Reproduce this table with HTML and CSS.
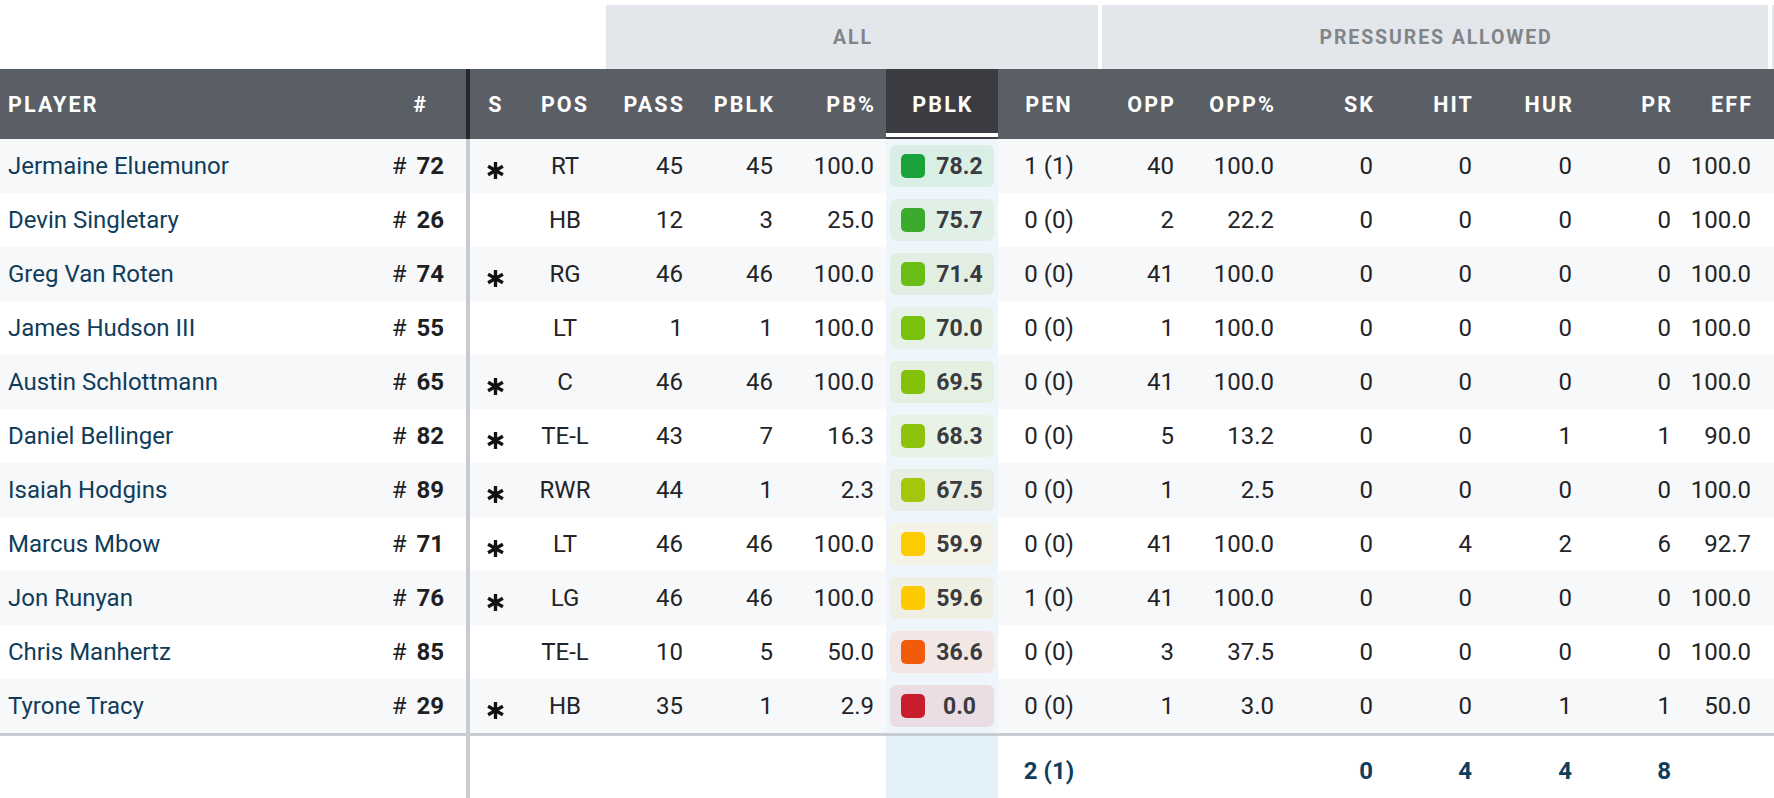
FILE: index.html
```html
<!DOCTYPE html>
<html>
<head>
<meta charset="utf-8">
<link rel="stylesheet" href="styles.css">
</head>
<body>
<table class="grid">
  <colgroup>
    <col class="w-player"><col class="w-num"><col class="w-s"><col class="w-pos">
    <col class="w-pass"><col class="w-pblk"><col class="w-pbp"><col class="w-act"><col class="w-pen">
    <col class="w-opp"><col class="w-oppp"><col class="w-sk"><col class="w-hit"><col class="w-hur"><col class="w-pr"><col class="w-eff"><col class="w-end">
  </colgroup>
  <thead>
    <tr class="groups">
      <th colspan="4"></th>
      <th colspan="5"><div class="gbox">ALL</div></th>
      <th colspan="7"><div class="gbox">PRESSURES ALLOWED</div></th>
      <th><div class="gbox gbox-end"></div></th>
    </tr>
    <tr class="heads">
      <th class="left">PLAYER</th>
      <th class="right num">#</th>
      <th class="center sep">S</th>
      <th class="center pos">POS</th>
      <th class="right">PASS</th>
      <th class="right">PBLK</th>
      <th class="right">PB%</th>
      <th class="center active">PBLK</th>
      <th class="center">PEN</th>
      <th class="right">OPP</th>
      <th class="right">OPP%</th>
      <th class="right">SK</th>
      <th class="right">HIT</th>
      <th class="right">HUR</th>
      <th class="right">PR</th>
      <th class="right eff">EFF</th>
      <th></th>
    </tr>
  </thead>
  <tbody id="rows">
    <tr><td class="name">Jermaine Eluemunor</td><td class="jersey"># <b>72</b></td><td class="sep star"><svg viewBox="0 0 20 20" class="ast"><path d="M10 1V19M2.2 5.5L17.8 14.5M17.8 5.5L2.2 14.5"/></svg></td><td class="center pos">RT</td><td class="right">45</td><td class="right">45</td><td class="right">100.0</td><td class="active"><div class="grade" style="--c:#1aa33a;--bg:#d9eee5"><i></i><span>78.2</span></div></td><td class="center">1 (1)</td><td class="right">40</td><td class="right">100.0</td><td class="right">0</td><td class="right">0</td><td class="right">0</td><td class="right">0</td><td class="right eff">100.0</td><td></td></tr>
    <tr><td class="name">Devin Singletary</td><td class="jersey"># <b>26</b></td><td class="sep star"></td><td class="center pos">HB</td><td class="right">12</td><td class="right">3</td><td class="right">25.0</td><td class="active"><div class="grade" style="--c:#3aab2c;--bg:#e0f0e6"><i></i><span>75.7</span></div></td><td class="center">0 (0)</td><td class="right">2</td><td class="right">22.2</td><td class="right">0</td><td class="right">0</td><td class="right">0</td><td class="right">0</td><td class="right eff">100.0</td><td></td></tr>
    <tr><td class="name">Greg Van Roten</td><td class="jersey"># <b>74</b></td><td class="sep star"><svg viewBox="0 0 20 20" class="ast"><path d="M10 1V19M2.2 5.5L17.8 14.5M17.8 5.5L2.2 14.5"/></svg></td><td class="center pos">RG</td><td class="right">46</td><td class="right">46</td><td class="right">100.0</td><td class="active"><div class="grade" style="--c:#6abd14;--bg:#e3eee2"><i></i><span>71.4</span></div></td><td class="center">0 (0)</td><td class="right">41</td><td class="right">100.0</td><td class="right">0</td><td class="right">0</td><td class="right">0</td><td class="right">0</td><td class="right eff">100.0</td><td></td></tr>
    <tr><td class="name">James Hudson III</td><td class="jersey"># <b>55</b></td><td class="sep star"></td><td class="center pos">LT</td><td class="right">1</td><td class="right">1</td><td class="right">100.0</td><td class="active"><div class="grade" style="--c:#78c10c;--bg:#e5f2e5"><i></i><span>70.0</span></div></td><td class="center">0 (0)</td><td class="right">1</td><td class="right">100.0</td><td class="right">0</td><td class="right">0</td><td class="right">0</td><td class="right">0</td><td class="right eff">100.0</td><td></td></tr>
    <tr><td class="name">Austin Schlottmann</td><td class="jersey"># <b>65</b></td><td class="sep star"><svg viewBox="0 0 20 20" class="ast"><path d="M10 1V19M2.2 5.5L17.8 14.5M17.8 5.5L2.2 14.5"/></svg></td><td class="center pos">C</td><td class="right">46</td><td class="right">46</td><td class="right">100.0</td><td class="active"><div class="grade" style="--c:#84c20a;--bg:#e5f0e3"><i></i><span>69.5</span></div></td><td class="center">0 (0)</td><td class="right">41</td><td class="right">100.0</td><td class="right">0</td><td class="right">0</td><td class="right">0</td><td class="right">0</td><td class="right eff">100.0</td><td></td></tr>
    <tr><td class="name">Daniel Bellinger</td><td class="jersey"># <b>82</b></td><td class="sep star"><svg viewBox="0 0 20 20" class="ast"><path d="M10 1V19M2.2 5.5L17.8 14.5M17.8 5.5L2.2 14.5"/></svg></td><td class="center pos">TE-L</td><td class="right">43</td><td class="right">7</td><td class="right">16.3</td><td class="active"><div class="grade" style="--c:#8ec30b;--bg:#e8f3e5"><i></i><span>68.3</span></div></td><td class="center">0 (0)</td><td class="right">5</td><td class="right">13.2</td><td class="right">0</td><td class="right">0</td><td class="right">1</td><td class="right">1</td><td class="right eff">90.0</td><td></td></tr>
    <tr><td class="name">Isaiah Hodgins</td><td class="jersey"># <b>89</b></td><td class="sep star"><svg viewBox="0 0 20 20" class="ast"><path d="M10 1V19M2.2 5.5L17.8 14.5M17.8 5.5L2.2 14.5"/></svg></td><td class="center pos">RWR</td><td class="right">44</td><td class="right">1</td><td class="right">2.3</td><td class="active"><div class="grade" style="--c:#a3c70b;--bg:#e8eee3"><i></i><span>67.5</span></div></td><td class="center">0 (0)</td><td class="right">1</td><td class="right">2.5</td><td class="right">0</td><td class="right">0</td><td class="right">0</td><td class="right">0</td><td class="right eff">100.0</td><td></td></tr>
    <tr><td class="name">Marcus Mbow</td><td class="jersey"># <b>71</b></td><td class="sep star"><svg viewBox="0 0 20 20" class="ast"><path d="M10 1V19M2.2 5.5L17.8 14.5M17.8 5.5L2.2 14.5"/></svg></td><td class="center pos">LT</td><td class="right">46</td><td class="right">46</td><td class="right">100.0</td><td class="active"><div class="grade" style="--c:#fdcc00;--bg:#f3f4e7"><i></i><span>59.9</span></div></td><td class="center">0 (0)</td><td class="right">41</td><td class="right">100.0</td><td class="right">0</td><td class="right">4</td><td class="right">2</td><td class="right">6</td><td class="right eff">92.7</td><td></td></tr>
    <tr><td class="name">Jon Runyan</td><td class="jersey"># <b>76</b></td><td class="sep star"><svg viewBox="0 0 20 20" class="ast"><path d="M10 1V19M2.2 5.5L17.8 14.5M17.8 5.5L2.2 14.5"/></svg></td><td class="center pos">LG</td><td class="right">46</td><td class="right">46</td><td class="right">100.0</td><td class="active"><div class="grade" style="--c:#fdca00;--bg:#efefe3"><i></i><span>59.6</span></div></td><td class="center">1 (0)</td><td class="right">41</td><td class="right">100.0</td><td class="right">0</td><td class="right">0</td><td class="right">0</td><td class="right">0</td><td class="right eff">100.0</td><td></td></tr>
    <tr><td class="name">Chris Manhertz</td><td class="jersey"># <b>85</b></td><td class="sep star"></td><td class="center pos">TE-L</td><td class="right">10</td><td class="right">5</td><td class="right">50.0</td><td class="active"><div class="grade" style="--c:#f25a0c;--bg:#f3e7e5"><i></i><span>36.6</span></div></td><td class="center">0 (0)</td><td class="right">3</td><td class="right">37.5</td><td class="right">0</td><td class="right">0</td><td class="right">0</td><td class="right">0</td><td class="right eff">100.0</td><td></td></tr>
    <tr><td class="name">Tyrone Tracy</td><td class="jersey"># <b>29</b></td><td class="sep star"><svg viewBox="0 0 20 20" class="ast"><path d="M10 1V19M2.2 5.5L17.8 14.5M17.8 5.5L2.2 14.5"/></svg></td><td class="center pos">HB</td><td class="right">35</td><td class="right">1</td><td class="right">2.9</td><td class="active"><div class="grade" style="--c:#c81d2d;--bg:#ebdde4"><i></i><span>0.0</span></div></td><td class="center">0 (0)</td><td class="right">1</td><td class="right">3.0</td><td class="right">0</td><td class="right">0</td><td class="right">1</td><td class="right">1</td><td class="right eff">50.0</td><td></td></tr>
  </tbody>
  <tfoot>
    <tr>
      <td></td><td></td><td class="sep"></td><td></td><td></td><td></td><td></td>
      <td class="active"></td>
      <td class="center total">2 (1)</td>
      <td></td><td></td>
      <td class="right total">0</td>
      <td class="right total">4</td>
      <td class="right total">4</td>
      <td class="right total">8</td>
      <td></td><td></td>
    </tr>
  </tfoot>
</table>
</body>
</html>
```

FILE: styles.css
```css
html, body {
  margin: 0;
  padding: 0;
  background: #ffffff;
}

body {
  font-family: Roboto, "Liberation Sans", Arial, sans-serif;
  color: #222326;
  overflow: hidden;
}

.grid {
  width: 1774px;
  table-layout: fixed;
  border-collapse: separate;
  border-spacing: 0;
}

.w-player { width: 350px; }
.w-num { width: 116px; }
.w-s { width: 54px; }
.w-pos { width: 84px; }
.w-pass { width: 91px; }
.w-pblk { width: 90px; }
.w-pbp { width: 101px; }
.w-act { width: 112px; }
.w-pen { width: 102px; }
.w-opp { width: 86px; }
.w-oppp { width: 100px; }
.w-sk { width: 99px; }
.w-hit { width: 99px; }
.w-hur { width: 100px; }
.w-pr { width: 99px; }
.w-eff { width: 87px; }
.w-end { width: 4px; }

th, td {
  padding: 0 12px 0 0;
  white-space: nowrap;
  overflow: hidden;
}

.left { text-align: left; }
.right { text-align: right; }
.center { text-align: center; padding-right: 0; }

/* group header row */
.groups th {
  height: 64px;
  padding: 5px 0 0 0;
  vertical-align: bottom;
}

.gbox {
  height: 64px;
  margin: 0 2px;
  background: #e3e6ea;
  color: #818589;
  font-size: 19.5px;
  font-weight: 700;
  letter-spacing: 1.9px;
  display: flex;
  align-items: center;
  justify-content: center;
  padding-left: 2px;
}

.gbox-end {
  margin: 0 0 0 2px;
}

/* column header row */
.heads th {
  height: 70px;
  background: #5a5e65;
  color: #ffffff;
  font-size: 21.5px;
  font-weight: 700;
  letter-spacing: 2.1px;
  vertical-align: middle;
}

.heads th.left { padding-left: 8px; }
.heads th.right { padding-right: 10px; }
.heads th.num { padding-right: 38px; }
.heads th.sep { box-shadow: inset 4px 0 0 #25282c; padding-left: 6px; }
.heads th.pos { padding-left: 6px; }
.heads th.eff { padding-right: 17px; }

.heads th.active {
  background: #3a3c41;
  position: relative;
  padding-left: 2px;
}

.heads th.active::after {
  content: "";
  position: absolute;
  left: 0;
  right: 0;
  bottom: 2px;
  height: 4px;
  background: #ffffff;
}

/* body rows */
tbody td {
  height: 54px;
  font-size: 24px;
  vertical-align: middle;
  color: #232427;
}

tbody tr:nth-child(odd) td { background: #f7f8fa; }
tbody tr:nth-child(even) td { background: #ffffff; }

tbody td.name {
  padding-left: 8px;
  color: #0f3d5a;
  text-align: left;
}

td.jersey {
  text-align: right;
  padding-right: 22px;
  color: #1e1f22;
}

td.jersey b {
  font-weight: 700;
  margin-left: 4px;
}

td.sep {
  box-shadow: inset 4px 0 0 #c8ccd2;
  padding: 0 0 0 4px;
}

td.star {
  text-align: center;
}

.ast {
  width: 19px;
  height: 19px;
  display: inline-block;
  vertical-align: middle;
  margin-top: 5px;
  fill: none;
  stroke: #111111;
  stroke-width: 3.5;
  stroke-linecap: butt;
}

td.pos { padding-left: 6px; }
td.eff { padding-right: 19px; }

tbody tr td.active {
  background: #eff6fb;
  padding: 0 4px;
}

.grade {
  height: 42px;
  border-radius: 6px;
  background: var(--bg);
  display: flex;
  align-items: center;
  padding-left: 11px;
  font-size: 23px;
}

.grade i {
  width: 24px;
  height: 24px;
  border-radius: 5px;
  background: var(--c);
  flex: none;
}

.grade span {
  flex: 1;
  text-align: center;
  margin-left: 6px;
  margin-right: 6px;
  font-weight: 700;
  color: #393b40;
}

/* footer */
tfoot td {
  height: 62px;
  border-top: 3px solid #c8ccd2;
  font-size: 24px;
  vertical-align: middle;
}

tfoot td.sep {
  box-shadow: inset 4px 0 0 #c8ccd2;
}

tfoot td.active {
  background: #e3f1fa;
  padding: 0;
}

tfoot td.total {
  font-weight: 700;
  color: #0f3d5a;
  padding-top: 4px;
}
```
